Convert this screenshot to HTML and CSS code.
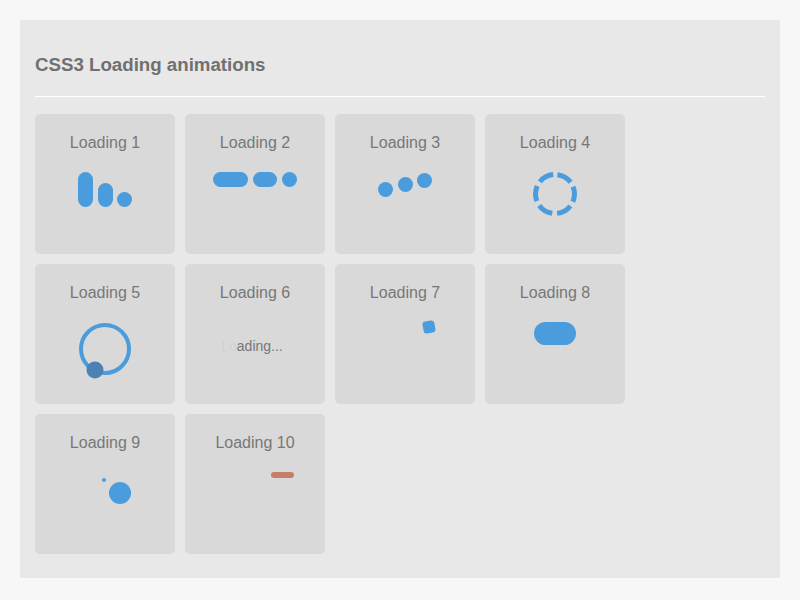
FILE: index.html
```html
<!DOCTYPE html>
<html>
<head>
<meta charset="utf-8">
<title>CSS3 Loading animations</title>
<link rel="stylesheet" href="styles.css">
</head>
<body>
<div class="panel">
  <h1 class="title">CSS3 Loading animations</h1>
  <hr class="rule">
  <div class="grid">
    <div class="card">
      <div class="label">Loading 1</div>
      <div class="stage">
        <div class="l1"><span class="b1"></span><span class="b2"></span><span class="b3"></span></div>
      </div>
    </div>
    <div class="card">
      <div class="label">Loading 2</div>
      <div class="stage">
        <div class="l2"><span class="p1"></span><span class="p2"></span><span class="p3"></span></div>
      </div>
    </div>
    <div class="card">
      <div class="label">Loading 3</div>
      <div class="stage">
        <div class="l3"><span class="d1"></span><span class="d2"></span><span class="d3"></span></div>
      </div>
    </div>
    <div class="card">
      <div class="label">Loading 4</div>
      <div class="stage">
        <svg class="l4" width="44" height="44" viewBox="0 0 44 44">
          <circle cx="22" cy="22" r="19.5" fill="none" stroke="#4a9cdc" stroke-width="5" stroke-dasharray="15.4 5" stroke-dashoffset="-2.5" transform="rotate(-90 22 22)"/>
        </svg>
      </div>
    </div>
    <div class="card">
      <div class="label">Loading 5</div>
      <div class="stage">
        <svg class="l5" width="56" height="58" viewBox="0 0 56 58">
          <circle cx="28" cy="26" r="24" fill="none" stroke="#4a9cdc" stroke-width="4"/>
          <circle cx="18" cy="47" r="8.5" fill="#4b82b3"/>
        </svg>
      </div>
    </div>
    <div class="card">
      <div class="label">Loading 6</div>
      <div class="stage">
        <div class="l6"><span class="fade">Lo</span>ading...</div>
      </div>
    </div>
    <div class="card">
      <div class="label">Loading 7</div>
      <div class="stage">
        <span class="l7"></span>
      </div>
    </div>
    <div class="card">
      <div class="label">Loading 8</div>
      <div class="stage">
        <span class="l8"></span>
      </div>
    </div>
    <div class="card">
      <div class="label">Loading 9</div>
      <div class="stage">
        <div class="l9"><span class="s"></span><span class="g"></span></div>
      </div>
    </div>
    <div class="card">
      <div class="label">Loading 10</div>
      <div class="stage">
        <span class="l10"></span>
      </div>
    </div>
  </div>
</div>
</body>
</html>
```

FILE: styles.css
```css
html, body {
  margin: 0;
  padding: 0;
  background: #f7f7f7;
}
body {
  padding: 20px;
  font-family: "Liberation Sans", Arial, sans-serif;
}
.panel {
  background: #e8e8e8;
  padding: 34px 15px 24px;
}
.title {
  margin: 0;
  font-size: 18.7px;
  line-height: 22px;
  font-weight: bold;
  color: #707070;
}
.rule {
  border: 0;
  height: 1px;
  background: #ffffff;
  margin: 20px 0 17px;
}
.grid {
  display: grid;
  grid-template-columns: repeat(4, 140px);
  gap: 10px;
}
.card {
  width: 140px;
  height: 140px;
  background: #d9d9d9;
  border-radius: 5px;
  display: flex;
  flex-direction: column;
  align-items: center;
}
.label {
  padding-top: 20px;
  font-size: 16px;
  line-height: 18px;
  color: #777777;
}
.stage {
  width: 140px;
  height: 88px;
  display: flex;
  justify-content: center;
  align-items: flex-start;
}
.l1 {
  margin-top: 20px;
  display: flex;
  align-items: flex-end;
  gap: 4.5px;
}
.l1 span, .l2 span, .l3 span {
  display: block;
  width: 15px;
  background: #4a9cdc;
  border-radius: 8px;
}
.l1 .b1 { height: 35px; }
.l1 .b2 { height: 24px; }
.l1 .b3 { height: 15px; }
.l2 {
  margin-top: 20px;
  display: flex;
  gap: 5px;
}
.l2 span { height: 15px; }
.l2 .p1 { width: 35px; }
.l2 .p2 { width: 24px; }
.l3 {
  margin-top: 21px;
  display: flex;
  align-items: flex-start;
  gap: 4.5px;
}
.l3 span { height: 15px; border-radius: 50%; }
.l3 .d1 { margin-top: 9px; }
.l3 .d2 { margin-top: 4px; }
.l4 {
  margin-top: 20px;
  display: block;
}
.l5 {
  margin-top: 21px;
  display: block;
}
.l6 {
  margin-top: 36px;
  margin-right: 6px;
  font-size: 14px;
  line-height: 16px;
  color: #777777;
}
.l6 .fade { color: #cdd2d6; }
.l7 {
  display: block;
  margin-top: 19px;
  width: 12px;
  height: 12px;
  border-radius: 3px;
  background: #4a9cdc;
  transform: translateX(24px) rotate(-10deg);
}
.l8 {
  display: block;
  margin-top: 20px;
  width: 42px;
  height: 23px;
  border-radius: 12px;
  background: #4a9cdc;
}
.l9 {
  margin-top: 26px;
  display: flex;
  align-items: flex-start;
  gap: 3px;
  transform: translateX(11px);
}
.l9 span {
  display: block;
  border-radius: 50%;
  background: #4a9cdc;
}
.l9 .s { width: 4px; height: 4px; }
.l9 .g { width: 22px; height: 22px; margin-top: 4px; }
.l10 {
  display: block;
  margin-top: 20px;
  width: 23px;
  height: 6px;
  border-radius: 3px;
  background: #c47f6b;
  transform: translateX(27px);
}
```
